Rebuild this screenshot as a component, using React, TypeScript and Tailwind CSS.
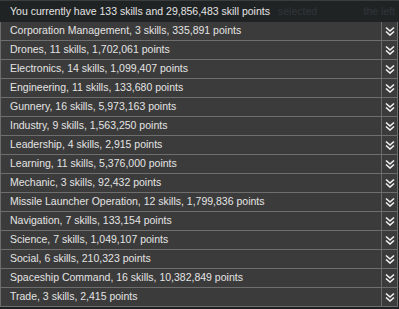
import React from "react";

const skills: string[] = [
      "Corporation Management, 3 skills, 335,891 points",
      "Drones, 11 skills, 1,702,061 points",
      "Electronics, 14 skills, 1,099,407 points",
      "Engineering, 11 skills, 133,680 points",
      "Gunnery, 16 skills, 5,973,163 points",
      "Industry, 9 skills, 1,563,250 points",
      "Leadership, 4 skills, 2,915 points",
      "Learning, 11 skills, 5,376,000 points",
      "Mechanic, 3 skills, 92,432 points",
      "Missile Launcher Operation, 12 skills, 1,799,836 points",
      "Navigation, 7 skills, 133,154 points",
      "Science, 7 skills, 1,049,107 points",
      "Social, 6 skills, 210,323 points",
      "Spaceship Command, 16 skills, 10,382,849 points",
      "Trade, 3 skills, 2,415 points",
];

const Chevrons = () => (
      <svg width="10" height="10" viewBox="0 0 10 10" fill="none">
            <path d="M1 1.5 L5 5 L9 1.5" stroke="#f2f2f2" strokeWidth="1.6" />
            <path d="M1 5.5 L5 9 L9 5.5" stroke="#f2f2f2" strokeWidth="1.6" />
      </svg>
);

export default function App() {
      return (
            <div
                  className="w-[399px] h-[309px] bg-[#1e2122] overflow-hidden text-[#e4e4e4] text-[10.5px]"
                  style={{ fontFamily: '"Liberation Sans", Arial, sans-serif' }}
            >
                  <div className="h-[22px] flex items-center pl-[10px] pr-[4px] border-t border-[#3a3d3e] bg-[#202324] whitespace-nowrap">
                        <span>You currently have 133 skills and 29,856,483 skill points</span>
                        <span className="ml-[8px] text-[#30363a]">selected</span>
                        <span className="ml-auto text-[#30363a]">the left</span>
                  </div>
                  <div className="flex flex-col border-l border-r border-[#6c6c6c] mr-[1px]">
                        {skills.map((s) => (
                              <div
                                    key={s}
                                    className="h-[19px] flex items-stretch bg-[#3b3b3b] border-b border-[#6e6e6e]"
                              >
                                    <div className="flex-1 flex items-center pl-[9px] whitespace-nowrap overflow-hidden">
                                          {s}
                                    </div>
                                    <div className="w-[16px] flex items-center justify-center border-l border-[#6a6a6a]">
                                          <Chevrons />
                                    </div>
                              </div>
                        ))}
                  </div>
            </div>
      );
}
